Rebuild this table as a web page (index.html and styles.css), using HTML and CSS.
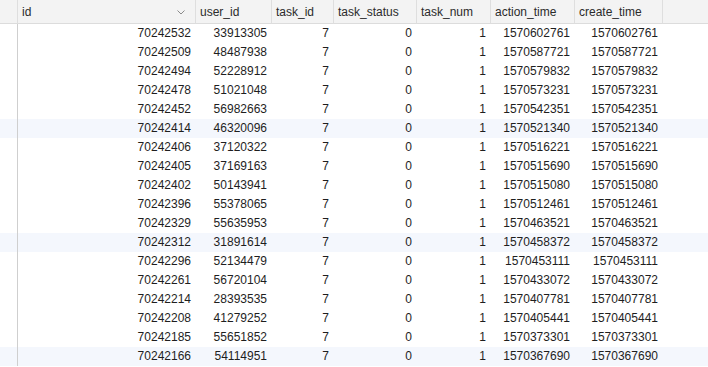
FILE: index.html
```html
<!DOCTYPE html>
<html lang="en">
<head>
  <meta charset="UTF-8">
  <title>user_task</title>
  <link rel="stylesheet" href="styles.css">
</head>
<body>

<table class="grid">
  <thead>
    <tr>
      <th class="gutter"></th>
      <th class="col-id">
        <span class="head-label">id</span>
        <svg class="sort" width="8" height="5" viewBox="0 0 8 5"><polyline points="0.5,0.5 4,4 7.5,0.5" fill="none" stroke="#8a8a8a" stroke-width="1"/></svg>
      </th>
      <th class="col-user">user_id</th>
      <th class="col-task">task_id</th>
      <th class="col-status">task_status</th>
      <th class="col-num">task_num</th>
      <th class="col-action">action_time</th>
      <th class="col-create">create_time</th>
      <th class="filler"></th>
    </tr>
  </thead>
  <tbody id="rows"></tbody>
</table>

<script>
const rows = [
  [70242532, 33913305, 1570602761],
  [70242509, 48487938, 1570587721],
  [70242494, 52228912, 1570579832],
  [70242478, 51021048, 1570573231],
  [70242452, 56982663, 1570542351],
  [70242414, 46320096, 1570521340],
  [70242406, 37120322, 1570516221],
  [70242405, 37169163, 1570515690],
  [70242402, 50143941, 1570515080],
  [70242396, 55378065, 1570512461],
  [70242329, 55635953, 1570463521],
  [70242312, 31891614, 1570458372],
  [70242296, 52134479, 1570453111],
  [70242261, 56720104, 1570433072],
  [70242214, 28393535, 1570407781],
  [70242208, 41279252, 1570405441],
  [70242185, 55651852, 1570373301],
  [70242166, 54114951, 1570367690]
];

const body = document.getElementById('rows');
rows.forEach(([id, user, time]) => {
  const tr = document.createElement('tr');
  tr.innerHTML = `
    <td class="gutter"></td>
    <td>${id}</td>
    <td>${user}</td>
    <td>7</td>
    <td>0</td>
    <td>1</td>
    <td>${time}</td>
    <td>${time}</td>
    <td class="filler"></td>
  `;
  body.appendChild(tr);
});
</script>

</body>
</html>
```

FILE: styles.css
```css
* {
  box-sizing: border-box;
}

body {
  margin: 0;
  background: #fff;
  font-family: 'Liberation Sans', Arial, sans-serif;
  font-size: 12px;
  color: #1e1e1e;
}

.grid {
  width: 100%;
  table-layout: fixed;
  border-collapse: separate;
  border-spacing: 0;
}

.grid th {
  height: 24px;
  padding: 0 4px;
  background: #f3f3f3;
  border-bottom: 1px solid #dcdcdc;
  border-right: 1px solid #dedede;
  font-weight: normal;
  text-align: left;
  color: #2b2b2b;
  white-space: nowrap;
}

.grid th.filler {
  border-right: none;
}

.grid td {
  height: 19px;
  line-height: 19px;
  padding: 0 5px 0 0;
  text-align: right;
  white-space: nowrap;
}

.grid td.gutter {
  border-right: 1px solid #cfcfcf;
  padding: 0;
}

.grid tbody tr:nth-child(6n) td {
  background: #f4f7fd;
}

.grid tbody tr:nth-child(6n) td.gutter {
  background: #f4f7fd;
}

.gutter { width: 18px; }
.col-id { width: 178px; }
.col-user { width: 76px; }
.col-task { width: 62px; }
.col-status { width: 83px; }
.col-num { width: 74px; }
.col-action { width: 84px; }
.col-create { width: 88px; }

.col-id {
  position: relative;
}

.head-label {
  display: inline-block;
}

.sort {
  position: absolute;
  right: 10px;
  top: 10px;
}
```
